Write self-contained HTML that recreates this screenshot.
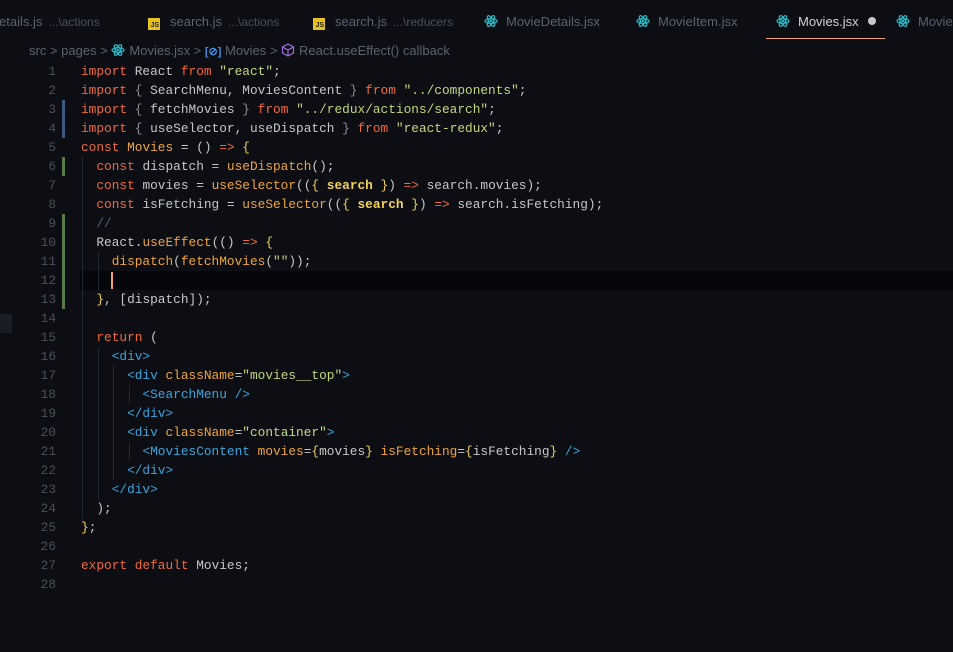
<!DOCTYPE html>
<html><head><meta charset="utf-8"><style>
*{margin:0;padding:0;box-sizing:border-box}
body{width:953px;height:652px;background:#0c0e14;overflow:hidden;position:relative;font-family:"Liberation Sans",sans-serif}
.tab{position:absolute;top:14px;font-size:13px;color:#5c6370;white-space:nowrap}
.tab .d{color:#4a505a;font-size:12px;margin-left:6px}
.js{display:inline-block;width:12px;height:12px;background:#e8c020;color:#222;font-size:7px;font-weight:bold;text-align:right;line-height:15px;vertical-align:-1px;margin-right:10px;padding-right:1px}
.ri{display:inline-block;vertical-align:-2px;margin-right:8px}
.bc{position:absolute;top:43px;left:29px;font-size:13px;color:#5c6370;white-space:nowrap}
.code{position:absolute;left:0;top:62px;font-family:"Liberation Mono",monospace;font-size:12.8px}
.ln{position:absolute;left:0;width:56px;text-align:right;color:#4b5058;height:19px;line-height:19px}
.l{position:absolute;left:81px;height:19px;line-height:19px;white-space:pre;color:#c5c8c6}
.k{color:#f06a3c}.s{color:#c5d77c}.f{color:#f0a53a}.b{color:#f2d25a;font-weight:bold}.t{color:#39a5dc}.a{color:#f0a53a}.y{color:#f2d25a}.c{color:#5c6370}.g{color:#8a8f98}
.bar{position:absolute;left:62px;width:3px}
.guide{position:absolute;width:1px;background:#242832}
</style></head><body>
<div class="tab" style="left:-1px">etails.js<span class="d">...\actions</span></div>
<div class="tab" style="left:148px"><span class="js">JS</span>search.js<span class="d">...\actions</span></div>
<div class="tab" style="left:313px"><span class="js">JS</span>search.js<span class="d">...\reducers</span></div>
<div class="tab" style="left:484px"><svg class="ri" width="14" height="14" viewBox="0 0 14 14"><g fill="none" stroke="#2bb3c0" stroke-width="1.3"><ellipse cx="7" cy="7" rx="6" ry="2.4"/><ellipse cx="7" cy="7" rx="6" ry="2.4" transform="rotate(60 7 7)"/><ellipse cx="7" cy="7" rx="6" ry="2.4" transform="rotate(120 7 7)"/></g><circle cx="7" cy="7" r="1.3" fill="#2bb3c0"/></svg>MovieDetails.jsx</div>
<div class="tab" style="left:636px"><svg class="ri" width="14" height="14" viewBox="0 0 14 14"><g fill="none" stroke="#2bb3c0" stroke-width="1.3"><ellipse cx="7" cy="7" rx="6" ry="2.4"/><ellipse cx="7" cy="7" rx="6" ry="2.4" transform="rotate(60 7 7)"/><ellipse cx="7" cy="7" rx="6" ry="2.4" transform="rotate(120 7 7)"/></g><circle cx="7" cy="7" r="1.3" fill="#2bb3c0"/></svg>MovieItem.jsx</div>
<div class="tab" style="left:776px;color:#d0d3d8"><svg class="ri" width="14" height="14" viewBox="0 0 14 14"><g fill="none" stroke="#2bb3c0" stroke-width="1.3"><ellipse cx="7" cy="7" rx="6" ry="2.4"/><ellipse cx="7" cy="7" rx="6" ry="2.4" transform="rotate(60 7 7)"/><ellipse cx="7" cy="7" rx="6" ry="2.4" transform="rotate(120 7 7)"/></g><circle cx="7" cy="7" r="1.3" fill="#2bb3c0"/></svg>Movies.jsx<span style="display:inline-block;width:8px;height:8px;border-radius:50%;background:#c8c8c8;margin-left:9px;vertical-align:1px"></span></div>
<div style="position:absolute;left:766px;top:38px;width:119px;height:1px;background:#f0a070"></div>
<div class="tab" style="left:896px"><svg class="ri" width="14" height="14" viewBox="0 0 14 14"><g fill="none" stroke="#2bb3c0" stroke-width="1.3"><ellipse cx="7" cy="7" rx="6" ry="2.4"/><ellipse cx="7" cy="7" rx="6" ry="2.4" transform="rotate(60 7 7)"/><ellipse cx="7" cy="7" rx="6" ry="2.4" transform="rotate(120 7 7)"/></g><circle cx="7" cy="7" r="1.3" fill="#2bb3c0"/></svg>Movie</div>

<div class="bc">src &gt; pages &gt; <svg class="ri" style="margin-right:4px" width="14" height="14" viewBox="0 0 14 14"><g fill="none" stroke="#2bb3c0" stroke-width="1.3"><ellipse cx="7" cy="7" rx="6" ry="2.4"/><ellipse cx="7" cy="7" rx="6" ry="2.4" transform="rotate(60 7 7)"/><ellipse cx="7" cy="7" rx="6" ry="2.4" transform="rotate(120 7 7)"/></g><circle cx="7" cy="7" r="1.3" fill="#2bb3c0"/></svg>Movies.jsx &gt; <span style="color:#4a8fe0;font-weight:bold;font-size:11px">[⊘]</span> Movies &gt; <svg class="ri" style="margin-right:4px" width="14" height="14" viewBox="0 0 14 14"><path d="M7 1L12.5 4V10L7 13L1.5 10V4Z M1.5 4L7 7L12.5 4 M7 7V13" fill="none" stroke="#a070e0" stroke-width="1.2"/></svg>React.useEffect() callback</div>

<div style="position:absolute;left:0;top:314px;width:12px;height:19px;background:#1a1d24"></div>
<div style="position:absolute;left:80px;top:271px;width:873px;height:19px;background:#05060a"></div>
<div class="bar" style="top:100px;height:38px;background:#3a5a80"></div>
<div class="bar" style="top:157px;height:19px;background:#5a7a4a"></div>
<div class="bar" style="top:214px;height:95px;background:#5a7a4a"></div>
<div class="guide" style="left:82px;top:157px;height:361px"></div>
<div class="guide" style="left:98px;top:252px;height:38px"></div>
<div class="guide" style="left:98px;top:347px;height:152px"></div>
<div class="guide" style="left:113px;top:366px;height:114px"></div>
<div class="guide" style="left:129px;top:385px;height:19px"></div>
<div class="guide" style="left:129px;top:442px;height:19px"></div>
<div style="position:absolute;left:111px;top:272px;width:2px;height:17px;background:#f0a070"></div>

<div class="code">
<div class="ln" style="top:0">1</div><div class="l" style="top:0"><span class="k">import</span> React <span class="k">from</span> <span class="s">"react"</span>;</div>
<div class="ln" style="top:19px">2</div><div class="l" style="top:19px"><span class="k">import</span> <span class="g">{</span> SearchMenu, MoviesContent <span class="g">}</span> <span class="k">from</span> <span class="s">"../components"</span>;</div>
<div class="ln" style="top:38px">3</div><div class="l" style="top:38px"><span class="k">import</span> <span class="g">{</span> fetchMovies <span class="g">}</span> <span class="k">from</span> <span class="s">"../redux/actions/search"</span>;</div>
<div class="ln" style="top:57px">4</div><div class="l" style="top:57px"><span class="k">import</span> <span class="g">{</span> useSelector, useDispatch <span class="g">}</span> <span class="k">from</span> <span class="s">"react-redux"</span>;</div>
<div class="ln" style="top:76px">5</div><div class="l" style="top:76px"><span class="k">const</span> <span class="f">Movies</span> = () <span class="k">=&gt;</span> <span class="y">{</span></div>
<div class="ln" style="top:95px">6</div><div class="l" style="top:95px">  <span class="k">const</span> dispatch = <span class="f">useDispatch</span>();</div>
<div class="ln" style="top:114px">7</div><div class="l" style="top:114px">  <span class="k">const</span> movies = <span class="f">useSelector</span>((<span class="y">{</span> <span class="b">search</span> <span class="y">}</span>) <span class="k">=&gt;</span> search.movies);</div>
<div class="ln" style="top:133px">8</div><div class="l" style="top:133px">  <span class="k">const</span> isFetching = <span class="f">useSelector</span>((<span class="y">{</span> <span class="b">search</span> <span class="y">}</span>) <span class="k">=&gt;</span> search.isFetching);</div>
<div class="ln" style="top:152px">9</div><div class="l" style="top:152px">  <span class="c">//</span></div>
<div class="ln" style="top:171px">10</div><div class="l" style="top:171px">  React.<span class="f">useEffect</span>(() <span class="k">=&gt;</span> <span class="y">{</span></div>
<div class="ln" style="top:190px">11</div><div class="l" style="top:190px">    <span class="f">dispatch</span>(<span class="f">fetchMovies</span>(<span class="s">""</span>));</div>
<div class="ln" style="top:209px">12</div><div class="l" style="top:209px"> </div>
<div class="ln" style="top:228px">13</div><div class="l" style="top:228px">  <span class="y">}</span>, [dispatch]);</div>
<div class="ln" style="top:247px">14</div>
<div class="ln" style="top:266px">15</div><div class="l" style="top:266px">  <span class="k">return</span> (</div>
<div class="ln" style="top:285px">16</div><div class="l" style="top:285px">    <span class="t">&lt;div&gt;</span></div>
<div class="ln" style="top:304px">17</div><div class="l" style="top:304px">      <span class="t">&lt;div</span> <span class="a">className</span>=<span class="s">"movies__top"</span><span class="t">&gt;</span></div>
<div class="ln" style="top:323px">18</div><div class="l" style="top:323px">        <span class="t">&lt;SearchMenu /&gt;</span></div>
<div class="ln" style="top:342px">19</div><div class="l" style="top:342px">      <span class="t">&lt;/div&gt;</span></div>
<div class="ln" style="top:361px">20</div><div class="l" style="top:361px">      <span class="t">&lt;div</span> <span class="a">className</span>=<span class="s">"container"</span><span class="t">&gt;</span></div>
<div class="ln" style="top:380px">21</div><div class="l" style="top:380px">        <span class="t">&lt;MoviesContent</span> <span class="a">movies</span>=<span class="y">{</span>movies<span class="y">}</span> <span class="a">isFetching</span>=<span class="y">{</span>isFetching<span class="y">}</span> <span class="t">/&gt;</span></div>
<div class="ln" style="top:399px">22</div><div class="l" style="top:399px">      <span class="t">&lt;/div&gt;</span></div>
<div class="ln" style="top:418px">23</div><div class="l" style="top:418px">    <span class="t">&lt;/div&gt;</span></div>
<div class="ln" style="top:437px">24</div><div class="l" style="top:437px">  );</div>
<div class="ln" style="top:456px">25</div><div class="l" style="top:456px"><span class="y">}</span>;</div>
<div class="ln" style="top:475px">26</div>
<div class="ln" style="top:494px">27</div><div class="l" style="top:494px"><span class="k">export</span> <span class="k">default</span> Movies;</div>
<div class="ln" style="top:513px">28</div>
</div>
</body></html>
